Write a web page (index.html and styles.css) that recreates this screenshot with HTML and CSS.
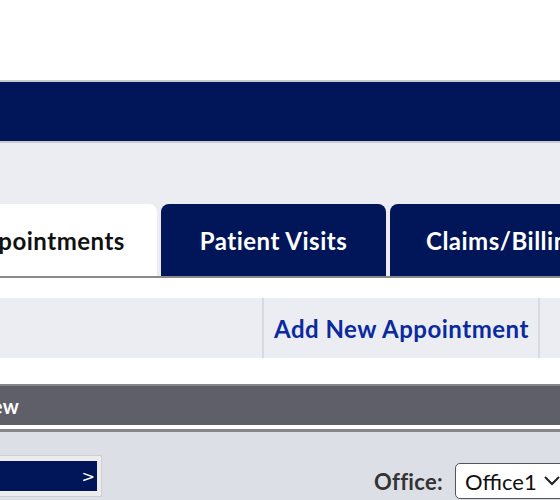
FILE: index.html
```html
<!DOCTYPE html>
<html>
<head>
<meta charset="utf-8">
<link rel="stylesheet" href="styles.css">
</head>
<body>
<div class="page">
  <div class="header"></div>
  <div class="navbar"></div>
  <div class="tabzone">
    <div class="tab active">Appointments</div>
    <div class="tab">Patient Visits</div>
    <div class="tab wide">Claims/Billing</div>
  </div>
  <div class="subnav">
    <div class="sub-spacer"></div>
    <div class="sub-divider"></div>
    <a class="sub-link" href="#">Add New Appointment</a>
    <div class="sub-divider"></div>
    <div class="sub-rest"></div>
  </div>
  <div class="section-title">
    <div class="title-text"><span>Appointment Overview</span></div>
  </div>
  <div class="content">
    <div class="nav-box">
      <div class="nav-btn"><span class="arrow">&gt;</span></div>
    </div>
    <div class="office">
      <span class="office-label">Office:</span>
      <div class="select">
        <span>Office1</span>
        <svg class="chev" width="18" height="12" viewBox="0 0 18 12"><path d="M2 2 L9 9 L16 2" fill="none" stroke="#222" stroke-width="2"/></svg>
      </div>
    </div>
  </div>
</div>
</body>
</html>
```
FILE: styles.css
```css
html, body {
  margin: 0;
  padding: 0;
  overflow: hidden;
  background: #fff;
}
body {
  font-family: Lato, "Open Sans", sans-serif;
}
.page {
  margin-left: -51px;
  width: 720px;
}
.header {
  height: 80px;
  background: #fff;
}
.navbar {
  height: 59px;
  background: #011659;
  border-top: 2px solid #c9cacf;
  border-bottom: 2px solid #c9cacf;
}
.tabzone {
  background: #ecedf3;
  padding-top: 61px;
  display: flex;
  gap: 4px;
  border-bottom: 2px solid #8a8a8a;
}
.tab {
  height: 72px;
  border-radius: 8px 8px 0 0;
  background: #011659;
  color: #fff;
  font-weight: 700;
  font-size: 24px;
  letter-spacing: 0.5px;
  display: flex;
  align-items: center;
  justify-content: center;
  width: 225px;
  flex: none;
  box-sizing: border-box;
}
.tab.active {
  background: #fff;
  color: #111;
  width: 212px;
  margin-left: -4px;
  padding-right: 10px;
}
.tab.wide {
  width: 260px;
  justify-content: flex-start;
  padding-left: 36px;
}
.subnav {
  margin-top: 20px;
  height: 60px;
  background: #ecedf3;
  display: flex;
  align-items: stretch;
}
.sub-spacer {
  width: 313px;
}
.sub-divider {
  width: 2px;
  background: #dadbe2;
}
.sub-link {
  display: flex;
  align-items: center;
  padding: 0 9px 0 10px;
  color: #0a2a9e;
  font-weight: 700;
  font-size: 24px;
  letter-spacing: 0.5px;
  text-decoration: none;
}
.sub-rest {
  flex: 1;
}
.section-title {
  margin-top: 26px;
  border-top: 2px solid #85858a;
  height: 39px;
  background: #5f5f69;
  display: flex;
  align-items: center;
}
.title-text {
  width: 70px;
  display: flex;
  justify-content: flex-end;
  white-space: nowrap;
  color: #fff;
  font-weight: 700;
  font-size: 20px;
  letter-spacing: 0.3px;
}
.content {
  margin-top: 4px;
  border-top: 3px solid #85858a;
  background: #dcdfe6;
  height: 100px;
  display: flex;
  align-items: flex-start;
}
.nav-box {
  margin-top: 23px;
  background: #ececec;
  border: 1px solid #cfcfcf;
  padding: 5px 4px 5px 5px;
  width: 142px;
}
.nav-btn {
  height: 30px;
  background: #011659;
  display: flex;
  align-items: center;
  justify-content: flex-end;
  padding-right: 2px;
}
.arrow {
  color: #fff;
  font-family: "DejaVu Sans", sans-serif;
  font-size: 16px;
}
.office {
  margin-left: 272px;
  margin-top: 31px;
  display: flex;
  align-items: center;
  gap: 12px;
}
.office-label {
  font-weight: 700;
  font-size: 22px;
  letter-spacing: 0.3px;
  color: #333;
}
.select {
  width: 106px;
  height: 34px;
  background: #fff;
  border: 1px solid #555;
  border-radius: 5px;
  display: flex;
  align-items: center;
  gap: 6px;
  padding-left: 9px;
  font-size: 22px;
  color: #111;
}
.chev {
  flex: none;
}
```
